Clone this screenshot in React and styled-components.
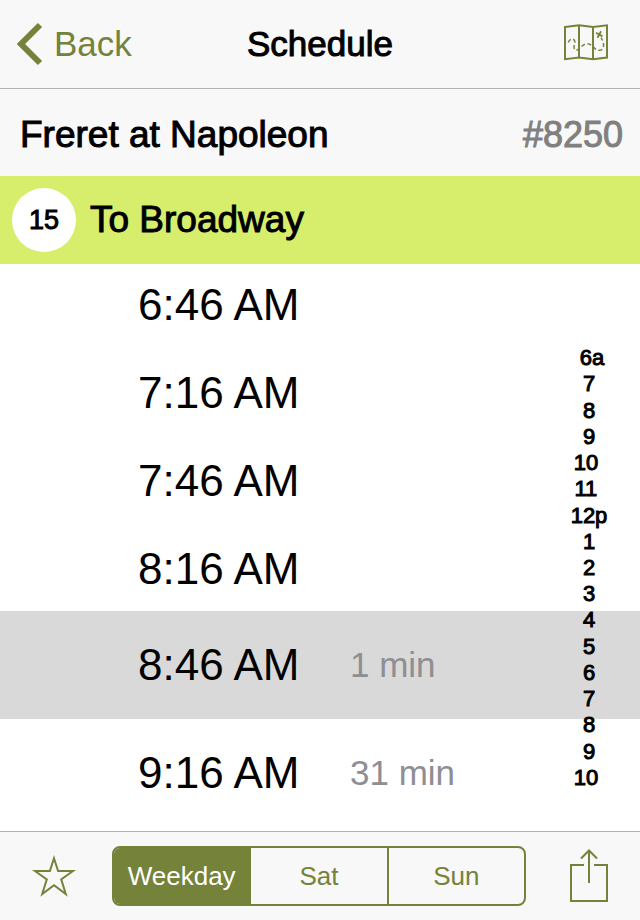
import React, { useState } from "react";
import styled, { createGlobalStyle, css } from "styled-components";

const green = "#75823a";
const barColor = "#f8f8f8";
const hairline = "#b2b2b2";

const GlobalStyle = createGlobalStyle`
  *, *::before, *::after { box-sizing: border-box; }
  body {
    margin: 0;
    background: #fff;
    color: #000;
    font-family: "Liberation Sans", Arial, sans-serif;
  }
  button { font: inherit; color: inherit; background: none; border: 0; padding: 0; cursor: pointer; }
  h1, h2, h3, p, ol { margin: 0; padding: 0; font-weight: 400; }
  svg { display: block; }
`;

/* Medium weight: the regular face thickened by an outline */
const medium = css`
  font-weight: 400;
  -webkit-text-stroke: 1px currentColor;
`;

const Screen = styled.div`
  display: flex;
  flex-direction: column;
  min-height: 100vh;
`;

const NavBar = styled.header`
  display: grid;
  grid-template-columns: 1fr auto 1fr;
  align-items: center;
  height: 89px;
  padding: 0 16px;
  background: ${barColor};
  border-bottom: 1px solid ${hairline};
`;

const BackButton = styled.a`
  display: flex;
  align-items: center;
  gap: 10px;
  justify-self: start;
  color: ${green};
  font-size: 35px;
  line-height: 40px;
  text-decoration: none;
`;

const NavTitle = styled.h1`
  ${medium}
  font-size: 35px;
  line-height: 40px;
`;

const IconButton = styled.button`
  display: flex;
  flex-shrink: 0;
  justify-self: end;
  color: ${green};
`;

const MapButton = styled(IconButton)`
  margin-right: 15px;
`;

const StopBar = styled.section`
  display: flex;
  align-items: center;
  justify-content: space-between;
  height: 87px;
  padding: 4px 17px 0 20px;
  background: ${barColor};
`;

const StopName = styled.h2`
  ${medium}
  font-size: 37px;
  line-height: 42px;
`;

const StopNumber = styled.p`
  ${medium}
  color: #808080;
  font-size: 36px;
  line-height: 42px;
`;

const RouteBar = styled.section`
  position: relative;
  z-index: 1;
  display: flex;
  align-items: center;
  gap: 14px;
  height: 88px;
  padding: 0 12px;
  background: #d6ee6c;
`;

const RouteBadge = styled.span`
  ${medium}
  display: flex;
  align-items: center;
  justify-content: center;
  width: 64px;
  height: 64px;
  border-radius: 50%;
  background: #fff;
  font-size: 27px;
`;

const Timetable = styled.main`
  position: relative;
  flex: 1;
`;

/* The list is scrolled slightly beneath the route bar */
const TimeList = styled.ol`
  margin-top: -5px;
  padding-bottom: 4px;
  list-style: none;
`;

const TimeRow = styled.li`
  display: grid;
  grid-template-columns: 212px 1fr;
  align-items: center;
  height: ${(p) => (p.$upcoming ? 108 : 88)}px;
  padding: ${(p) => (p.$upcoming ? 0 : 4)}px 0 0 138px;
  background: ${(p) => (p.$next ? "#d9d9d9" : "transparent")};
`;

const Time = styled.time`
  font-size: 44px;
  line-height: 50px;
`;

const Wait = styled.span`
  color: #8e8e93;
  font-size: 35px;
  line-height: 40px;
`;

const HourIndex = styled.nav`
  position: absolute;
  top: 81px;
  right: 20px;
  display: flex;
  flex-direction: column;
  width: 62px;
  height: 446px;
`;

const HourLink = styled.a`
  ${medium}
  display: flex;
  flex: 1;
  align-items: center;
  justify-content: center;
  color: #000;
  font-size: 22px;
  line-height: 26px;
  text-decoration: none;
  white-space: pre;
`;

const ToolBar = styled.footer`
  display: flex;
  align-items: center;
  justify-content: space-between;
  height: 89px;
  padding: 0 31px 0 32px;
  background: ${barColor};
  border-top: 1px solid ${hairline};
`;

const Segments = styled.div`
  display: flex;
  flex: 1;
  height: 60px;
  margin: 0 43px 0 36px;
  overflow: hidden;
  border: 2px solid ${green};
  border-radius: 8px;
`;

const Segment = styled.button`
  flex: 1;
  && {
    color: ${(p) => (p.$active ? "#fff" : green)};
    background: ${(p) => (p.$active ? green : "transparent")};
  }
  font-size: 26px;
  line-height: 30px;
  &:not(:last-child) {
    border-right: 2px solid ${green};
  }
`;

const BackIcon = () => (
  <svg width="28" height="44" viewBox="0 0 28 44" fill="none" stroke="currentColor" strokeWidth="6" aria-hidden="true">
    <path d="M24 3 5 22 24 41" />
  </svg>
);

const MapIcon = () => (
  <svg width="45" height="40" viewBox="0 0 45 40" fill="none" stroke="currentColor" aria-hidden="true">
    <path strokeWidth="2" d="M1 3 15 1.300 29 3 43 1.300V33.500L29 35.200 15 33.500 1 35.200ZM15 1.300V33.500M29 3V35.200" />
    <path
      strokeWidth="1.5"
      strokeDasharray="4 2.5"
      d="M4.300 18.500C5.500 14 10.500 14 11 18C10.500 20.500 9 23.500 11 26C15 27.500 17 20.500 23 19.700C29 19.700 29.500 26 35.300 26.300C41 26.300 40.500 18 37 13.700"
    />
    <path strokeWidth="1.8" d="M32 8.800 38.500 12.400M37 7.300 33.500 13.700" />
  </svg>
);

const StarIcon = () => (
  <svg width="44" height="42" viewBox="0 0 44 42" fill="none" stroke="currentColor" strokeWidth="2" aria-hidden="true">
    <path d="M22 3.200 26.100 16H41L29.200 24.400 33.800 39 22 30.200 10.200 39 14.800 24.400 3 16H17.900Z" />
  </svg>
);

const ShareIcon = () => (
  <svg width="40" height="54" viewBox="0 0 40 54" fill="none" stroke="currentColor" strokeWidth="2" aria-hidden="true">
    <path d="M15 16H2V52H38V16H25M20 34V2M12 9.500 20 1.500 28 9.500" />
  </svg>
);

const departures = [
  { time: "6:46 AM" },
  { time: "7:16 AM" },
  { time: "7:46 AM" },
  { time: "8:16 AM" },
  { time: "8:46 AM", wait: "1 min", next: true },
  { time: "9:16 AM", wait: "31 min" },
];

const hours = [" 6a", "7", "8", "9", "10 ", "11 ", "12p", "1", "2", "3", "4", "5", "6", "7", "8", "9", "10 "];

const days = ["Weekday", "Sat", "Sun"];

export default function App() {
  const [day, setDay] = useState("Weekday");

  return (
    <Screen>
      <GlobalStyle />
      <NavBar>
        <BackButton href="#back">
          <BackIcon />
          Back
        </BackButton>
        <NavTitle>Schedule</NavTitle>
        <MapButton type="button" aria-label="Map">
          <MapIcon />
        </MapButton>
      </NavBar>
      <StopBar>
        <StopName>Freret at Napoleon</StopName>
        <StopNumber>#8250</StopNumber>
      </StopBar>
      <RouteBar>
        <RouteBadge>15</RouteBadge>
        <StopName as="h3">To Broadway</StopName>
      </RouteBar>
      <Timetable>
        <TimeList>
          {departures.map(({ time, wait, next }) => (
            <TimeRow key={time} $upcoming={Boolean(wait)} $next={next}>
              <Time>{time}</Time>
              {wait && <Wait>{wait}</Wait>}
            </TimeRow>
          ))}
        </TimeList>
        <HourIndex aria-label="Hours">
          {hours.map((hour, i) => (
            <HourLink key={i} href={`#hour-${i + 6}`}>
              {hour}
            </HourLink>
          ))}
        </HourIndex>
      </Timetable>
      <ToolBar>
        <IconButton type="button" aria-label="Add to favorites">
          <StarIcon />
        </IconButton>
        <Segments role="group" aria-label="Service day">
          {days.map((name) => (
            <Segment
              key={name}
              type="button"
              aria-pressed={day === name}
              $active={day === name}
              onClick={() => setDay(name)}
            >
              {name}
            </Segment>
          ))}
        </Segments>
        <IconButton type="button" aria-label="Share">
          <ShareIcon />
        </IconButton>
      </ToolBar>
    </Screen>
  );
}
